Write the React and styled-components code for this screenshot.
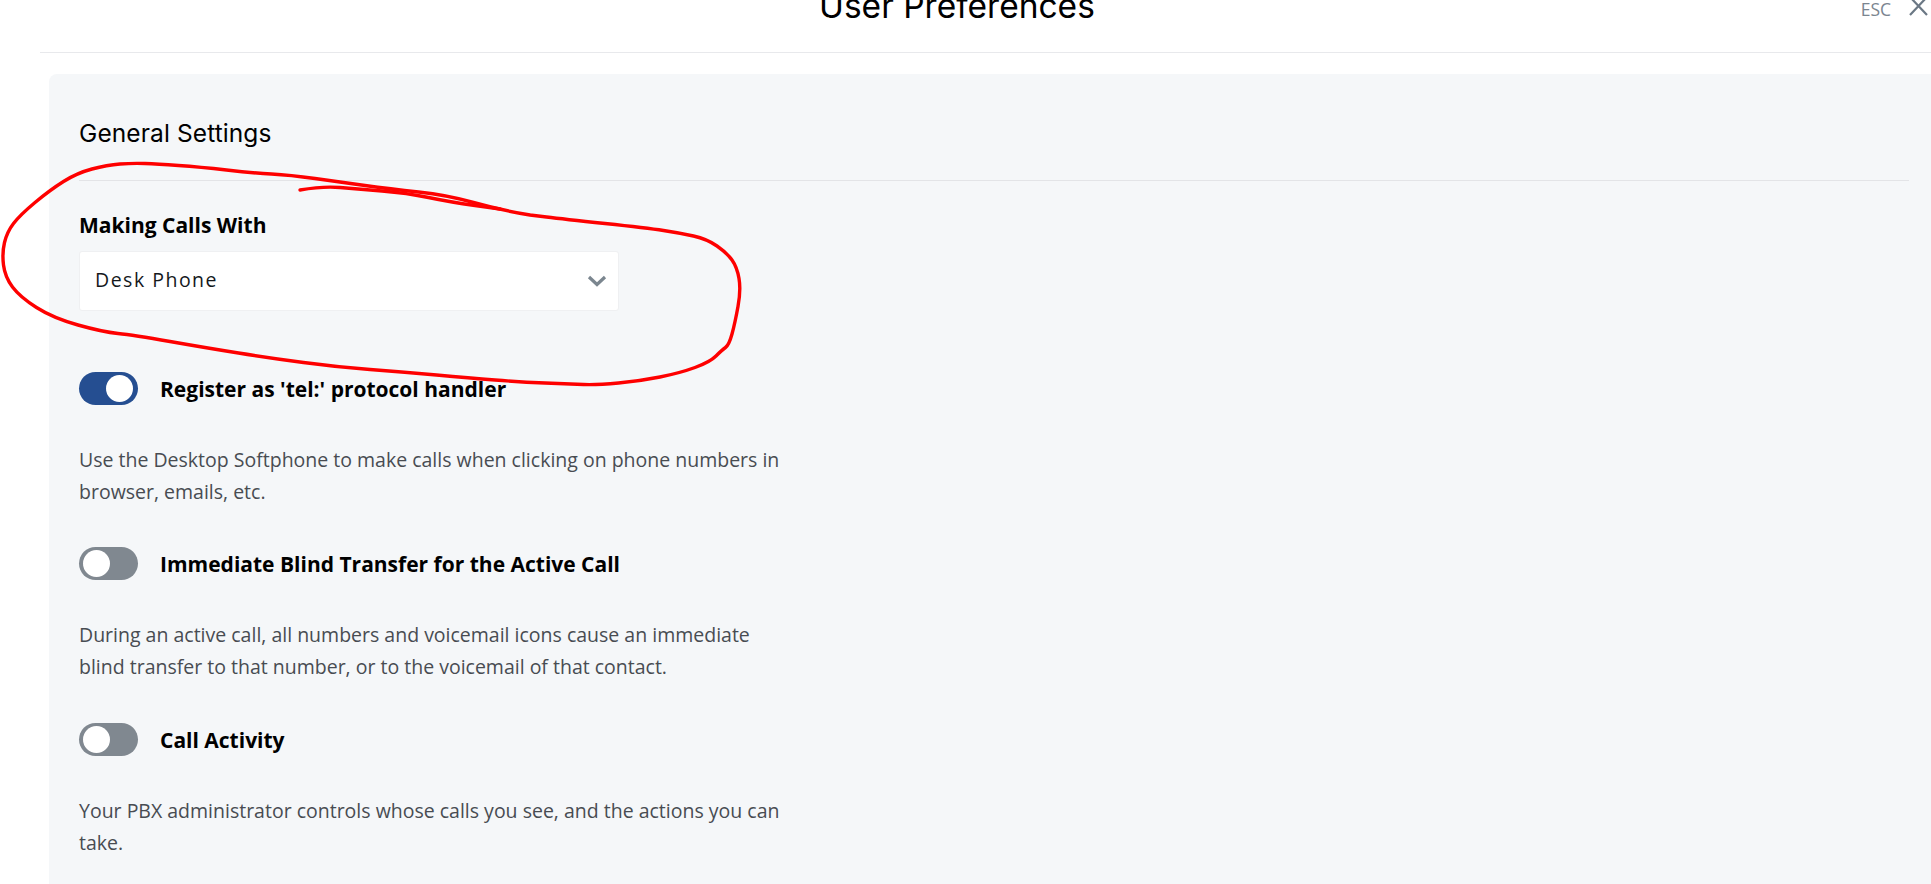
import React from 'react'
import styled, { createGlobalStyle } from 'styled-components'

const Global = createGlobalStyle`
  html, body {
    margin: 0;
    padding: 0;
    background: #fff;
    font-family: "Open Sans", "Liberation Sans", sans-serif;
  }
`

const Page = styled.div`
  position: relative;
  width: 1931px;
  height: 884px;
  overflow: hidden;
  background: #fff;
`

const Header = styled.header`
  display: flex;
  align-items: flex-start;
  height: 52px;
  margin-left: 40px;
  padding-left: 779px;
  border-bottom: 1px solid #e8e9ec;
`

const Title = styled.h1`
  margin: -14px 0 0;
  font-family: Inter, sans-serif;
  font-size: 33.5px;
  line-height: 40px;
  font-weight: 400;
  color: #000;
  white-space: nowrap;
`

const Close = styled.div`
  display: flex;
  align-items: flex-start;
  gap: 18px;
  margin-left: auto;
  margin-right: 3px;
`

const Esc = styled.span`
  font-size: 17.5px;
  line-height: 18px;
  color: #7b8590;
`

const CloseIcon = styled.svg`
  display: block;
  width: 19px;
  height: 17px;
  color: #6b7885;
`

const Panel = styled.main`
  margin: 21px 0 0 49px;
  padding: 44px 22px 0 30px;
  height: 810px;
  box-sizing: border-box;
  background: #f5f7f9;
  border-radius: 8px 0 0 0;
`

const PanelTitle = styled.h2`
  margin: 0;
  padding-bottom: 32px;
  font-family: Inter, sans-serif;
  font-size: 24.5px;
  line-height: 30px;
  font-weight: 400;
  letter-spacing: 0.1px;
  color: #000;
  border-bottom: 1px solid #e3e4e7;
`

const FieldLabel = styled.label`
  display: block;
  margin-top: 30px;
  font-size: 21px;
  line-height: 28px;
  font-weight: 700;
  color: #000;
`

const Select = styled.div`
  display: flex;
  align-items: center;
  justify-content: space-between;
  width: 540px;
  height: 60px;
  margin-top: 12px;
  padding: 0 11px 3px 15px;
  box-sizing: border-box;
  background: #fff;
  border: 1px solid #eff0f2;
  border-radius: 3px;
  font-size: 19.5px;
  letter-spacing: 1.5px;
  color: #14181c;
`

const Chevron = styled.svg`
  display: block;
  width: 20px;
  height: 12px;
  margin-top: 3px;
  color: #7b868f;
`

const Setting = styled.section`
  margin-top: ${p => p.$top}px;
  width: 720px;
`

const ToggleRow = styled.div`
  display: flex;
  align-items: center;
  gap: 22px;
  height: 33px;
`

const Toggle = styled.span`
  display: flex;
  align-items: center;
  justify-content: ${p => (p.$on ? 'flex-end' : 'flex-start')};
  width: 59px;
  height: 33px;
  padding: 0 ${p => (p.$on ? 5 : 4)}px;
  box-sizing: border-box;
  border-radius: 17px;
  background: ${p => (p.$on ? '#254e91' : '#808890')};
`

const Knob = styled.span`
  width: 27px;
  height: 27px;
  border-radius: 50%;
  background: #fff;
`

const SettingName = styled.span`
  font-size: 21px;
  font-weight: 700;
  color: #000;
`

const Description = styled.p`
  margin: 39px 0 0;
  font-size: 19.5px;
  line-height: 31.5px;
  color: #484c52;
`

// hand drawn circle on top of the screenshot
const Scribble = styled.svg`
  position: absolute;
  left: 0;
  top: 0;
  width: 1931px;
  height: 884px;
  pointer-events: none;
`

const settings = [
  {
    name: "Register as 'tel:' protocol handler",
    on: true,
    top: 61,
    text: 'Use the Desktop Softphone to make calls when clicking on phone numbers in browser, emails, etc.',
  },
  {
    name: 'Immediate Blind Transfer for the Active Call',
    on: false,
    top: 40,
    text: 'During an active call, all numbers and voicemail icons cause an immediate blind transfer to that number, or to the voicemail of that contact.',
  },
  {
    name: 'Call Activity',
    on: false,
    top: 41,
    text: 'Your PBX administrator controls whose calls you see, and the actions you can take.',
  },
]

const shortStroke = [
  [300, 190], [323, 186], [357, 189], [407, 193], [450, 202], [500, 209],
]

const loopStroke = [
  [530, 215], [500, 210], [447, 195], [390, 189], [340, 182], [290, 175], [253, 173],
  [200, 167], [157, 164], [133, 163], [107, 165], [77, 173], [50, 190], [20, 215],
  [7, 232], [2, 253], [5, 277], [20, 297], [53, 318], [103, 332], [133, 335],
  [207, 348], [270, 358], [337, 367], [403, 372], [470, 378], [520, 382], [570, 384],
  [597, 385], [640, 381], [680, 373], [710, 362], [722, 350], [729, 345], [735, 323],
  [741, 290], [737, 267], [727, 253], [707, 239], [680, 233], [647, 228], [563, 219],
  [530, 215],
]

// quadratic curves through the midpoints, keeps the line looking hand drawn
const smooth = points => {
  let d = `M${points[0][0]} ${points[0][1]}`
  for (let i = 1; i < points.length - 1; i++) {
    const midX = (points[i][0] + points[i + 1][0]) / 2
    const midY = (points[i][1] + points[i + 1][1]) / 2
    d += ` Q${points[i][0]} ${points[i][1]} ${midX} ${midY}`
  }
  const last = points[points.length - 1]
  return `${d} L${last[0]} ${last[1]}`
}

export default function App() {
  return (
    <Page>
      <Global />
      <Header>
        <Title>User Preferences</Title>
        <Close>
          <Esc>ESC</Esc>
          <CloseIcon viewBox="0 0 19 17" fill="none" stroke="currentColor" strokeWidth="2.2">
            <path d="M1 -3 L18 15 M18 -3 L1 15" />
          </CloseIcon>
        </Close>
      </Header>
      <Panel>
        <PanelTitle>General Settings</PanelTitle>
        <FieldLabel>Making Calls With</FieldLabel>
        <Select>
          Desk Phone
          <Chevron viewBox="0 0 20 12" fill="none" stroke="currentColor" strokeWidth="3.2">
            <path d="M2 2 L10 9.5 L18 2" />
          </Chevron>
        </Select>
        {settings.map(item => (
          <Setting key={item.name} $top={item.top}>
            <ToggleRow>
              <Toggle $on={item.on}>
                <Knob />
              </Toggle>
              <SettingName>{item.name}</SettingName>
            </ToggleRow>
            <Description>{item.text}</Description>
          </Setting>
        ))}
      </Panel>
      <Scribble viewBox="0 0 1931 884" fill="none" stroke="#fe0000" strokeWidth="3.4" strokeLinecap="round" strokeLinejoin="round">
        <path d={smooth(shortStroke)} />
        <path d={smooth(loopStroke)} />
      </Scribble>
    </Page>
  )
}
